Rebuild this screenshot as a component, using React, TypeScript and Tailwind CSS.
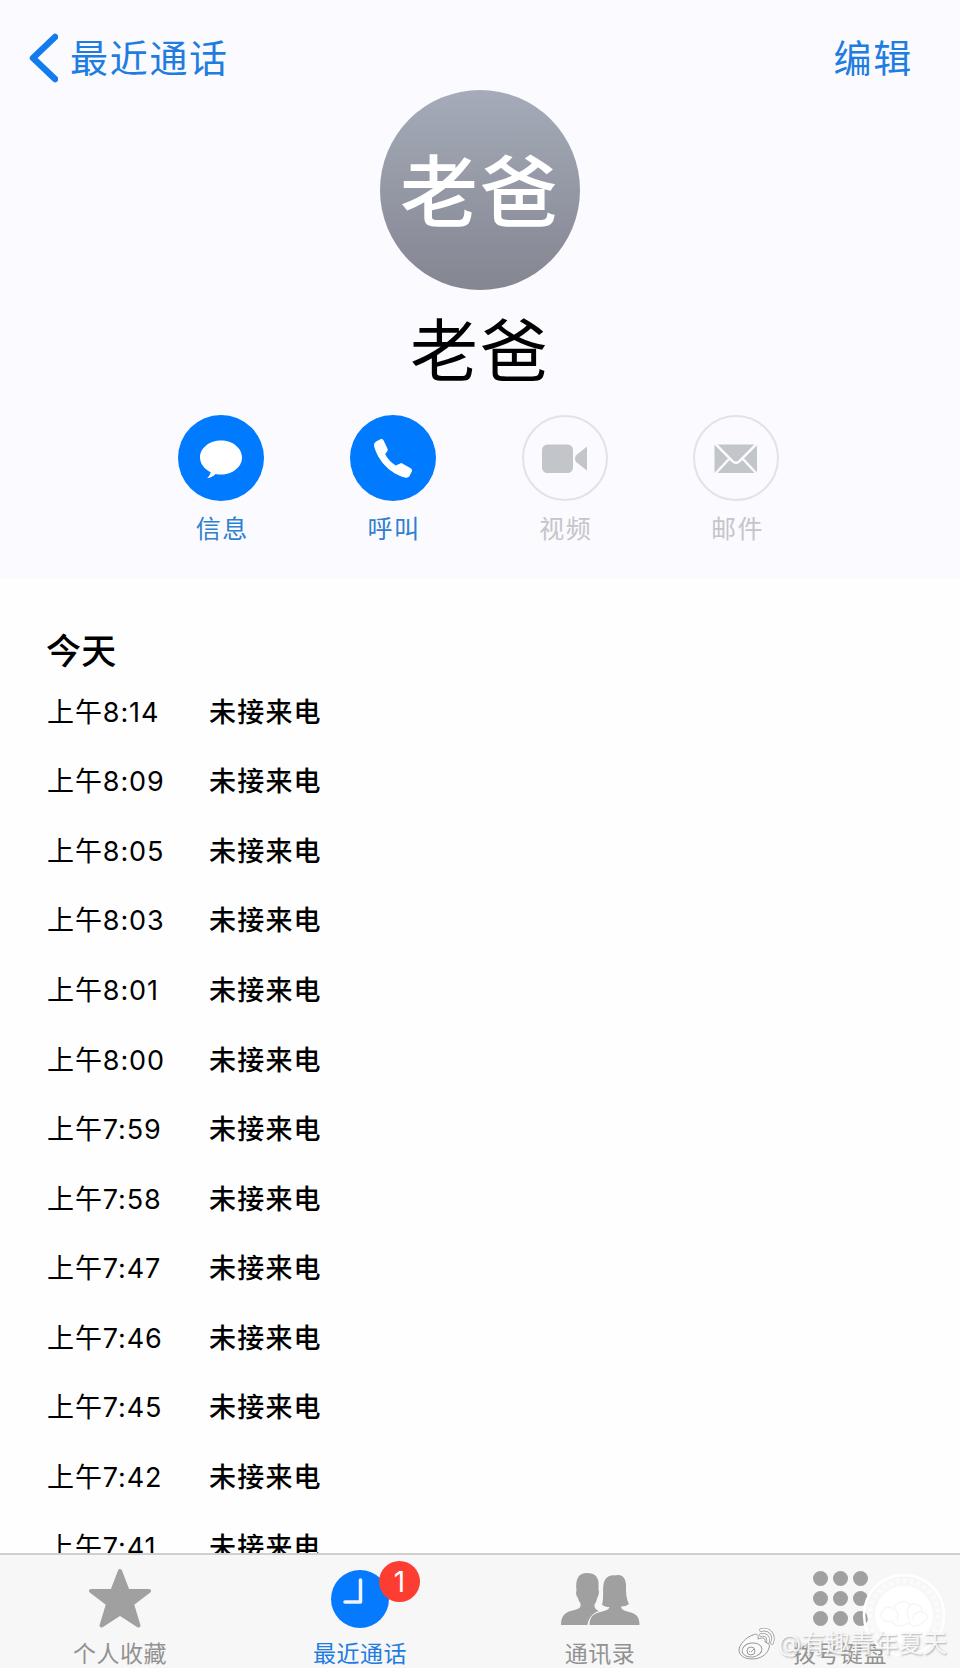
import type { ReactNode } from "react";
import { clsx } from "clsx";

const calls = [
  "8:14", "8:09", "8:05", "8:03", "8:01", "8:00", "7:59",
  "7:58", "7:47", "7:46", "7:45", "7:42", "7:41",
];

function MessageIcon() {
  return (
    <svg width="86" height="86" viewBox="0 0 86 86" fill="#fff">
      <path d="M43 25.500c11.600 0 21 7.500 21 17s-9.400 17-21 17c-2 0-3.700-.2-5.400-.6-2 2.200-5 3.800-8.400 4.100 1.900-1.600 3.100-3.700 3.500-5.800C26.500 54.300 22 48.800 22 42.500c0-9.500 9.400-17 21-17z" />
    </svg>
  );
}

function PhoneIcon() {
  return (
    <svg width="86" height="86" viewBox="0 0 86 86" fill="#fff">
      <path d="M26.500 26.300 30.500 24.200c1.300-.5 2.300 0 3 1.100l4 8.500c.5 1.200.2 2.200-.8 3.100l-1.500 2.300c2.500 4.800 6.300 8.700 10.500 11.300l4-1.800c1-.5 2-.5 3 .1l8 4.500c1.300 1 1.600 2 1 3.400l-2.200 4.300c-1 1.600-2.600 2-4.500 1.500C40.500 58.800 28 46 24.200 31.500c-.5-2.500.3-4.100 2.300-5.200z" />
    </svg>
  );
}

function VideoIcon() {
  return (
    <svg width="86" height="86" viewBox="0 0 86 86" fill="#c2c5ca">
      <rect x="20" y="29.500" width="31" height="28.500" rx="5.500" />
      <path d="M53 43.500c0-1.500.6-2.700 1.700-3.700L65 31.500v24l-10.300-8c-1.100-1-1.700-2.300-1.700-4z" />
    </svg>
  );
}

function MailIcon() {
  return (
    <svg width="86" height="86" viewBox="0 0 86 86">
      <path fill="#c2c5ca" d="M21.500 29.500h42.500V58H21.500z" />
      <path
        d="m22 28.500 17.500 17.700c2.500 2.400 4.500 2.400 7 0L64 28.500M22 59l14-15M64 59 50 44"
        fill="none"
        stroke="#fafaff"
        strokeWidth="2.500"
      />
    </svg>
  );
}

function StarIcon() {
  return (
    <svg width="66" height="62" viewBox="0 0 66 62">
      <path
        d="M33 3 40.700 23H62L45 36 51.500 57.500 33 45.500 14.500 57.500 21 36 4 23H25.300z"
        fill="#a0a0a0"
        stroke="#a0a0a0"
        strokeWidth="4"
        strokeLinejoin="round"
      />
    </svg>
  );
}

function ClockIcon() {
  return (
    <svg width="58" height="58" viewBox="0 0 58 58">
      <circle cx="29" cy="29" r="29" fill="#067aff" />
      <path d="M29.500 10v22H14" fill="none" stroke="#f1f5fb" strokeWidth="3.500" strokeLinecap="round" strokeLinejoin="round" />
    </svg>
  );
}

function PeopleIcon() {
  return (
    <svg width="80" height="54" viewBox="0 0 80 54" fill="#a0a0a0">
      <path d="M27 1c8 0 12.500 4.500 11.500 13v4c1 1 .3 5.500-1.500 8.500-.5 2.500-1 4-2.500 6v2c.5 2.500 2 3.500 4.500 4.500-6 2-10.500 6.500-11.500 14H1c0-8 3-12 9.500-14 6-1.800 9.500-2 10-5v-2.500c-1.500-2-2-3.500-2.500-5.500-2-2-2.500-6-1.500-7.500C15 6.500 19 1 27 1z" />
      <path d="M42 32.500c2-6 .5-14 1.500-20 1-7 6-10.500 12-9C62 1.500 66 6 66 13.500c0 7 0 12.500 3 18.500-2 1.700-5 2.500-8 2.500.5 4 5 4.500 10 6 6 2 8.500 5 8.500 12.500H29.500c0-7.500 3-10.500 9-12.500 5-1.500 10-2 11-5.500-2.500 0-6-.5-7.500-2.500z" />
    </svg>
  );
}

function KeypadIcon() {
  return (
    <div className="grid grid-cols-3 gap-[5px]">
      {Array.from({ length: 9 }, (_, i) => (
        <span key={i} className="size-[15px] rounded-full bg-[#a0a0a0]" />
      ))}
    </div>
  );
}

type ActionProps = { label: string; enabled?: boolean; children: ReactNode };

function Action({ label, enabled, children }: ActionProps) {
  return (
    <button className="flex w-[171.700px] flex-col items-center">
      <span
        className={clsx(
          "flex size-[86px] items-center justify-center rounded-full",
          enabled ? "bg-[#007aff]" : "border-2 border-[#e2e2e7]",
        )}
      >
        <span className="shrink-0">{children}</span>
      </span>
      <span
        className={clsx(
          "mt-[10px] pl-[2px] text-[25px] leading-[36px] tracking-[1.500px]",
          enabled ? "text-[#2f80cf]" : "text-[#c5c5ca]",
        )}
      >
        {label}
      </span>
    </button>
  );
}

type TabProps = { label: string; active?: boolean; badge?: number; children: ReactNode };

function Tab({ label, active, badge, children }: TabProps) {
  return (
    <button className="flex flex-1 flex-col items-center justify-start">
      <span className="relative flex h-[81px] shrink-0 items-center pt-[6px]">
        {children}
        {badge && (
          <span className="absolute top-[6px] left-[48px] flex size-[41px] items-center justify-center rounded-full bg-[#fd3d31] font-['Inter'] text-[28px] text-white">
            {badge}
          </span>
        )}
      </span>
      <span
        className={clsx(
          "mt-px text-[23px] leading-[34px] tracking-[0.500px]",
          active ? "text-[#1f7ce0]" : "text-[#929292]",
        )}
      >
        {label}
      </span>
    </button>
  );
}

function Watermark() {
  return (
    <div className="pointer-events-none absolute inset-0 overflow-hidden">
      <svg className="absolute top-[17px] left-[861px]" width="86" height="86" viewBox="0 0 86 86" fill="none">
        <circle cx="43" cy="43" r="40" stroke="#fff" strokeWidth="2.500" />
        <circle cx="43" cy="43" r="29" fill="#fff" />
        <circle cx="43" cy="43" r="34.500" stroke="#fff" strokeWidth="5" strokeDasharray="4 3" opacity=".55" />
        <path
          d="M20 42c2-7 9-9 13-5 2-8 12-10 16-4 6-3 13 1 12 7 7 1 7 8 1 10-4 5-11 5-15 1-6 5-14 3-16-2-6 2-11-1-11-7zm13-5c4 2 5 6 3 12m13-16c-4 5-4 10 0 18m12-11c-5-1-8 2-10 7"
          stroke="#f6f6f6"
          strokeWidth="1.500"
        />
      </svg>
      <svg className="absolute top-[73px] left-[738px]" width="38" height="34" viewBox="0 0 38 34" fill="none" stroke="#999" strokeWidth="1">
        <path fill="#fafafa" d="M15 7c4-2 6 0 5 4 5-2 8-1 7 3 4 1 5 3 4 6-2 7-9 11-17 11C6 31 1 27 1 22 1 17 8 9 15 7z" />
        <ellipse cx="14" cy="22" rx="10" ry="7" transform="rotate(-8 14 22)" />
        <circle cx="13" cy="23" r="4" />
        <path d="m11 24 1-1M13 24l3-3" />
        <path d="M23 7c5-1 8 2 7 7M23 2c9-2 14 5 11 13" stroke="#999" strokeWidth="3.500" strokeLinecap="round" />
        <path d="M23 7c5-1 8 2 7 7M23 2c9-2 14 5 11 13" stroke="#fafafa" strokeWidth="2" strokeLinecap="round" />
      </svg>
      <span className="absolute top-[72px] left-[778px] text-[24px] leading-[34px] tracking-[0.300px] whitespace-nowrap text-white/85 [text-shadow:1px_1px_2px_#aaa]">
        @有趣青年夏天
      </span>
    </div>
  );
}

export default function App() {
  return (
    <div className="flex h-[1668px] w-[960px] flex-col overflow-hidden bg-[#fefefe] font-['Inter','Noto_Sans_CJK_SC',sans-serif] text-black">
      <header className="flex h-[579px] shrink-0 flex-col items-center bg-[#fafaff]">
        <nav className="flex h-[90px] w-full shrink-0 items-center justify-between pt-[25px] pr-[47px] pl-[29px] text-[38px] leading-[60px] tracking-[1.700px] text-[#1f7ce0]">
          <button className="flex items-center gap-[12px]">
            <svg width="29" height="50" viewBox="0 0 29 50" fill="none" stroke="#127bf0" strokeWidth="6.500" strokeLinecap="round" strokeLinejoin="round">
              <path d="M26 4 4 25l22 21" />
            </svg>
            最近通话
          </button>
          <button>编辑</button>
        </nav>
        <div className="flex size-[200px] shrink-0 items-center justify-center rounded-full bg-linear-to-b from-[#a5abb9] to-[#848691] pt-[6px] text-[78px] leading-none font-medium tracking-[2px] text-white">
          老爸
        </div>
        <h1 className="mt-[16px] text-[68px] leading-[90px] tracking-[2px]">老爸</h1>
        <div className="mt-[19px] mr-[2px] flex w-[687px]">
          <Action label="信息" enabled>
            <MessageIcon />
          </Action>
          <Action label="呼叫" enabled>
            <PhoneIcon />
          </Action>
          <Action label="视频">
            <VideoIcon />
          </Action>
          <Action label="邮件">
            <MailIcon />
          </Action>
        </div>
      </header>

      <main className="min-h-0 flex-1 overflow-hidden px-[46px] pt-[47px]">
        <h2 className="text-[35px] leading-[50px] font-medium tracking-[0.200px]">今天</h2>
        <ul className="pt-[2px]">
          {calls.map((time) => (
            <li key={time} className="flex h-[69.600px] items-center text-[27px]">
              <span className="w-[163px] pl-px tracking-[0.900px]">上午{time}</span>
              <span className="font-medium tracking-[1.200px]">未接来电</span>
            </li>
          ))}
        </ul>
      </main>

      <footer className="relative flex h-[115px] shrink-0 border-t-2 border-[#cfcfcf] bg-[#f7f7f7]">
        <Tab label="个人收藏">
          <StarIcon />
        </Tab>
        <Tab label="最近通话" active badge={1}>
          <ClockIcon />
        </Tab>
        <Tab label="通讯录">
          <PeopleIcon />
        </Tab>
        <Tab label="拨号键盘">
          <KeypadIcon />
        </Tab>
        <Watermark />
      </footer>
    </div>
  );
}
